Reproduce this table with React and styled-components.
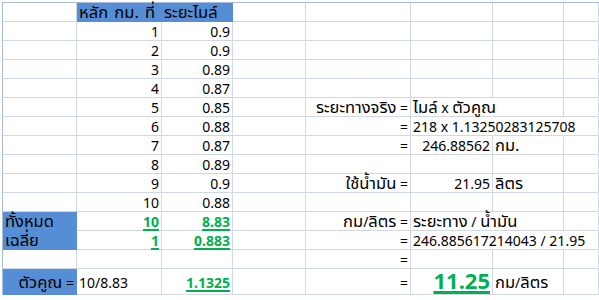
import React from 'react'
import styled, { createGlobalStyle } from 'styled-components'

const GlobalStyle = createGlobalStyle`
  body {
    margin: 0;
    background: #fff;
  }
`

const FILL = '#558ED5'
const GRID = '#D0D7E5'

const Page = styled.div`
  width: 599px;
  height: 300px;
  overflow: hidden;
  padding: 2px 0 0 2px;
  box-sizing: border-box;
  font-family: Tahoma, "Noto Sans", "Noto Sans Thai", Loma, Garuda, sans-serif;
  font-size: 14px;
  color: #000;
`

const Sheet = styled.div`
  display: grid;
  grid-template-columns: 74px 85px 71px 73px 105px 82px 71px 1fr;
  grid-template-rows: repeat(14, 19px) 26px;
  border-top: 1px solid #A9BCD6;
  border-left: 1px solid #A9BCD6;
`

const Cell = styled.div`
  box-sizing: border-box;
  display: flex;
  align-items: flex-end;
  justify-content: ${p => (p.$align === 'right' ? 'flex-end' : 'flex-start')};
  padding: 0 2px ${p => (p.$tall ? '3px' : '0')};
  background: ${p => p.$fill || 'transparent'};
  border-bottom: 1px solid ${p => p.$fill || GRID};
  border-right: 1px solid ${p => (p.$spill ? 'transparent' : p.$fill || GRID)};
  white-space: nowrap;
  min-width: 0;
`

const Value = styled.span`
  line-height: ${p => (p.$big ? '22px' : '16px')};
  font-size: ${p => (p.$big ? '22px' : '14px')};
  font-weight: ${p => (p.$win ? 700 : 400)};
  color: ${p => (p.$win ? '#00B050' : 'inherit')};
  text-decoration: ${p => (p.$win ? 'underline' : 'none')};
  text-decoration-thickness: ${p => (p.$big ? '3px' : '2px')};
  text-underline-offset: 2px;
`

const Thai = styled.span`
  font-size: 1.18em;
  line-height: 14px;
  word-spacing: 2px;
`

const THAI_RUN = /([\u0E00-\u0E7F]+(?:\.? [\u0E00-\u0E7F]+)*\.?)/

const withThai = t =>
  t.split(THAI_RUN).map((part, i) =>
    /[\u0E00-\u0E7F]/.test(part) ? <Thai key={i}>{part}</Thai> : part
  )

const e = {}
const R = (t, extra) => ({ t, align: 'right', ...extra })
const L = (t, extra) => ({ t, align: 'left', ...extra })
const win = { win: true }
const blue = { fill: FILL }

const miles = ['0.9', '0.9', '0.89', '0.87', '0.85', '0.88', '0.87', '0.89', '0.9', '0.88']

// ฝั่งซ้าย: ตารางหลัก กม. กับระยะไมล์
const left = [
  [e, L('หลัก กม. ที่', blue), L('ระยะไมล์', blue), e],
  ...miles.map((m, i) => [e, R(String(i + 1)), R(m), e]),
  [L('ทั้งหมด', blue), R('10', win), R('8.83', win), e],
  [L('เฉลี่ย', blue), R('1', win), R('0.883', win), e],
  [e, e, e, e],
  [R('ตัวคูณ =', blue), L('10/8.83'), R('1.1325', win), e],
]

// ฝั่งขวา: การคำนวณ
const right = {
  5: [R('ระยะทางจริง ='), L('ไมล์ x ตัวคูณ', { spill: true }), e, e],
  6: [R('='), L('218 x 1.13250283125708', { spill: true }), L('', { spill: true }), e],
  7: [R('='), R('246.88562'), L('กม.'), e],
  9: [R('ใช้น้ำมัน ='), R('21.95'), L('ลิตร'), e],
  11: [R('กม/ลิตร ='), L('ระยะทาง / น้ำมัน', { spill: true }), e, e],
  12: [R('='), L('246.885617214043 / 21.95', { spill: true }), L('', { spill: true }), e],
  13: [R('='), e, e, e],
  14: [R('='), R('11.25', { big: true, ...win }), L('กม/ลิตร'), e],
}

const App = () => (
  <Page>
    <GlobalStyle />
    <Sheet>
      {left.map((row, r) =>
        [...row, ...(right[r] || [e, e, e, e])].map((c, i) => (
          <Cell
            key={`${r}-${i}`}
            $align={c.align}
            $fill={c.fill}
            $spill={c.spill}
            $tall={r === 14}
          >
            {c.t && (
              <Value $win={c.win} $big={c.big}>
                {withThai(c.t)}
              </Value>
            )}
          </Cell>
        ))
      )}
    </Sheet>
  </Page>
)

export default App
